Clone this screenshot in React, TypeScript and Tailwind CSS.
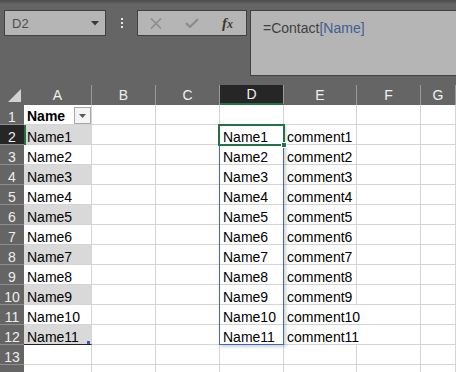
const COLS = [
  { label: "A", cls: "w-[68px]" },
  { label: "B", cls: "w-[64px]" },
  { label: "C", cls: "w-[64px]" },
  { label: "D", cls: "w-[64px]" },
  { label: "E", cls: "w-[73px]" },
  { label: "F", cls: "w-[64px]" },
  { label: "G", cls: "flex-1" },
];

const ROWS = Array.from({ length: 14 }, (_, i) => i + 1);

function cellText(row: number, col: string) {
  if (row >= 2 && row <= 12) {
    const n = row - 1;
    if (col === "A" || col === "D") return `Name${n}`;
    if (col === "E") return `comment${n}`;
  }
  return "";
}

function FormulaBar() {
  return (
    <div className="h-[85px] bg-[#656565]">
      <div className="h-[4px] bg-gradient-to-b from-[#4a4a4a] to-[#656565]" />
      <div className="flex items-start pl-[4px] pt-[6px]">
        {/* Name box */}
        <div className="flex h-[26px] w-[102px] items-center justify-between border border-[#414141] bg-[#b5b5b5] pl-[7px] pr-[6px]">
          <span className="text-[13px] leading-none text-[#4d4d4d]">D2</span>
          <svg width="8" height="5" viewBox="0 0 8 5">
            <path d="M0 0h8L4 4.5z" fill="#3a3a3a" />
          </svg>
        </div>
        <div className="flex h-[26px] w-[31px] flex-col items-center justify-center gap-[2px]">
          <span className="h-[2px] w-[2px] bg-[#e6e6e6]" />
          <span className="h-[2px] w-[2px] bg-[#e6e6e6]" />
          <span className="h-[2px] w-[2px] bg-[#e6e6e6]" />
        </div>
        {/* Cancel / enter / function */}
        <div className="flex h-[26px] w-[110px] items-center gap-[23px] border border-[#414141] bg-[#b5b5b5] pl-[12px]">
          <svg width="12" height="11" viewBox="0 0 12 11">
            <path d="M1 0.5l10 10M11 0.5l-10 10" stroke="#8c8c8c" strokeWidth="1.6" fill="none" />
          </svg>
          <svg width="14" height="10" viewBox="0 0 14 10">
            <path d="M1 5l4 4L13 1" stroke="#8c8c8c" strokeWidth="2.2" fill="none" />
          </svg>
          <span className="font-['Liberation_Serif',serif] text-[15px] font-bold italic leading-none text-[#3a3a3a]">
            f<span className="text-[12px]">x</span>
          </span>
        </div>
        {/* Formula input */}
        <div className="ml-[3px] h-[66px] flex-1 border border-r-0 border-[#414141] bg-[#b5b5b5] pl-[12px] pt-[5px]">
          <span className="text-[14px] leading-[16px] text-[#3f3f3f]">
            =Contact<span className="text-[#40608f]">[Name]</span>
          </span>
        </div>
      </div>
    </div>
  );
}

function HeaderRow() {
  return (
    <div className="flex h-[20px] bg-[#656565] text-[14px] text-[#f0f0f0]">
      <div className="flex w-[24px] items-end justify-end pb-[3px] pr-[3px]">
        <svg width="13" height="13" viewBox="0 0 13 13">
          <path d="M13 0v13H0z" fill="#d2d2d2" />
        </svg>
      </div>
      {COLS.map((c) => (
        <div
          key={c.label}
          className={`${c.cls} flex items-center justify-center border-r border-[#9a9a9a] ${
            c.label === "D" ? "border-b-2 border-b-[#217346] bg-[#262626]" : ""
          }`}
        >
          <span className="leading-[18px]">{c.label}</span>
        </div>
      ))}
    </div>
  );
}

function Row({ r }: { r: number }) {
  const active = r === 2;
  return (
    <div className="flex h-[20px] text-[14px]">
      <div
        className={`relative z-10 w-[24px] border-b border-[#8e8e8e] pt-[2px] text-center leading-[20px] text-[#eeeeee] ${
          active ? "bg-[#262626] shadow-[2px_0_0_#217346]" : "bg-[#656565]"
        }`}
      >
        {r < 14 ? r : ""}
      </div>
      {COLS.map((c) => {
        const text = cellText(r, c.label);
        const banded = c.label === "A" && r >= 2 && r <= 12 && r % 2 === 0;
        const overflow = c.label === "E" && (r === 11 || r === 12);
        const tableEnd = c.label === "A" && r === 12;
        return (
          <div
            key={c.label}
            className={`${c.cls} relative whitespace-nowrap border-b pl-[3px] pt-[2px] leading-[20px] text-black ${
              overflow ? "" : "border-r border-r-[#d4d4d4]"
            } ${tableEnd ? "border-b-[#222]" : "border-b-[#d4d4d4]"} ${banded ? "bg-[#d9d9d9]" : ""}`}
          >
            {r === 1 && c.label === "A" ? (
              <div className="flex items-start justify-between">
                <span className="font-bold leading-[18px]">Name</span>
                <span className="flex h-[17px] w-[17px] items-center justify-center border border-[#a8a8a8] bg-[#f4f4f4]">
                  <svg width="7" height="4" viewBox="0 0 7 4">
                    <path d="M0 0h7L3.5 4z" fill="#5a5a5a" />
                  </svg>
                </span>
              </div>
            ) : (
              text
            )}
            {tableEnd && (
              <span className="absolute bottom-[0px] right-[1px] h-[3px] w-[3px] bg-[#4650c0]" />
            )}
          </div>
        );
      })}
    </div>
  );
}

export default function App() {
  return (
    <div className="h-[372px] w-[456px] overflow-hidden bg-white font-['Liberation_Sans',Arial,sans-serif]">
      <FormulaBar />
      <HeaderRow />
      <div className="relative">
        {ROWS.map((r) => (
          <Row key={r} r={r} />
        ))}
        {/* copied range D2:D12 */}
        <div className="pointer-events-none absolute left-[219px] top-[19px] h-[221px] w-[65px] border border-[#3d6bc4] shadow-[2px_2px_3px_rgba(0,0,0,0.18)]" />
        {/* active cell D2 */}
        <div className="pointer-events-none absolute left-[218px] top-[19px] h-[22px] w-[67px] border-2 border-[#217346]" />
        <div className="pointer-events-none absolute left-[281px] top-[37px] h-[6px] w-[6px] border border-white bg-[#217346]" />
      </div>
    </div>
  );
}
